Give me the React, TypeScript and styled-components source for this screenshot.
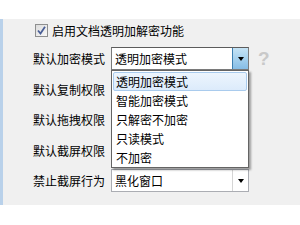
import React from "react";
import styled, { createGlobalStyle } from "styled-components";

const GlobalStyle = createGlobalStyle`
  html, body {
    margin: 0;
    padding: 0;
    background: #ffffff;
  }
  body {
    font-family: "Noto Sans CJK SC", "Noto Sans", sans-serif;
    font-size: 12px;
    color: #000000;
  }
`;

const Page = styled.div`
  width: 300px;
  height: 225px;
  overflow: hidden;
  background: #ffffff;
`;

const TopGap = styled.div`
  height: 19px;
`;

const Panel = styled.div`
  position: relative;
  height: 186px;
  box-sizing: border-box;
  background: #f0f0f0;
  border-left: 3px solid #b9d1ea;
  padding: 5px 0 0 30px;
  overflow: hidden;
`;

const CheckRow = styled.label`
  display: flex;
  align-items: center;
  gap: 4px;
  height: 13px;
  margin-left: 2px;
  line-height: 13px;
  white-space: nowrap;
`;

const CheckBox = styled.span`
  position: relative;
  width: 13px;
  height: 13px;
  box-sizing: border-box;
  border: 1px solid #8e8f8f;
  background: linear-gradient(135deg, #dcdcdc 0%, #f8f8f8 100%);
  flex: none;
  svg {
    position: absolute;
    left: 1px;
    top: 1px;
  }
`;

const Form = styled.div`
  display: grid;
  grid-template-columns: 78px 138px auto;
  grid-auto-rows: 23px;
  row-gap: 7.5px;
  margin-top: 10px;
  align-items: center;
`;

const Label = styled.span`
  line-height: 23px;
  white-space: nowrap;
`;

const WideLabel = styled(Label)`
  grid-column: 1 / 4;
`;

const SelectWrap = styled.div`
  position: relative;
  height: 23px;
`;

const Select = styled.div<{ $open?: boolean }>`
  display: flex;
  height: 23px;
  box-sizing: border-box;
  border: 1px solid ${({ $open }) => ($open ? "#7a7a7a" : "#abadb3")};
  border-top-color: ${({ $open }) => ($open ? "#5c5c5c" : "#abadb3")};
  background: #ffffff;
`;

const SelectValue = styled.span`
  flex: 1;
  padding-left: 3px;
  line-height: 21px;
  white-space: nowrap;
  overflow: hidden;
`;

const ArrowButton = styled.span<{ $open?: boolean }>`
  display: flex;
  align-items: center;
  justify-content: center;
  width: 16px;
  box-sizing: border-box;
  border-left: 1px solid ${({ $open }) => ($open ? "#3c7fb1" : "#d5d5d5")};
  background: ${({ $open }) =>
    $open ? "linear-gradient(#c5e3f5 0%, #a6d1ee 50%, #86bde6 100%)" : "#ffffff"};
  &::after {
    content: "";
    border-left: 3.5px solid transparent;
    border-right: 3.5px solid transparent;
    border-top: 4px solid #000000;
  }
`;

const Help = styled.span`
  padding-left: 9px;
  font-family: "Liberation Sans", Arial, sans-serif;
  font-weight: bold;
  font-size: 19px;
  line-height: 23px;
  color: #c9c9c9;
`;

const DropList = styled.ul`
  position: absolute;
  top: 23px;
  left: 0;
  width: 138px;
  height: 98px;
  box-sizing: border-box;
  margin: 0;
  padding: 1px;
  list-style: none;
  background: #ffffff;
  border: 1px solid #646464;
  box-shadow: 2px 2px 2px rgba(0, 0, 0, 0.35);
  z-index: 10;
`;

const Option = styled.li<{ $active?: boolean }>`
  height: 19px;
  box-sizing: border-box;
  padding-left: 2px;
  line-height: 17px;
  white-space: nowrap;
  border: 1px solid ${({ $active }) => ($active ? "#a9cbed" : "transparent")};
  border-radius: 2px;
  background: ${({ $active }) =>
    $active ? "linear-gradient(#edf5fd, #dcebfb)" : "transparent"};
`;

const modes = ["透明加密模式", "智能加密模式", "只解密不加密", "只读模式", "不加密"];

const Combo: React.FC<{ value?: string; open?: boolean }> = ({ value, open }) => (
  <Select $open={open}>
    <SelectValue>{value}</SelectValue>
    <ArrowButton $open={open} />
  </Select>
);

export default function App() {
  return (
    <Page>
      <GlobalStyle />
      <TopGap />
      <Panel>
        <CheckRow>
          <CheckBox>
            <svg width="9" height="9" viewBox="0 0 9 9">
              <path d="M1 4.5 L3.5 7.5 L8 0.8" fill="none" stroke="#4a5f97" strokeWidth="1.8" />
            </svg>
          </CheckBox>
          启用文档透明加解密功能
        </CheckRow>
        <Form>
          <Label>默认加密模式</Label>
          <SelectWrap>
            <Combo value="透明加密模式" open />
            <DropList>
              {modes.map((m, i) => (
                <Option key={m} $active={i === 0}>
                  {m}
                </Option>
              ))}
            </DropList>
          </SelectWrap>
          <Help>?</Help>

          {/* these three combos sit under the open list */}
          <Label>默认复制权限</Label>
          <Combo />
          <span />

          <Label>默认拖拽权限</Label>
          <Combo />
          <span />

          <Label>默认截屏权限</Label>
          <Combo />
          <span />

          <Label>禁止截屏行为</Label>
          <Combo value="黑化窗口" />
          <span />

          <WideLabel>加密时对以下程序生效</WideLabel>
        </Form>
      </Panel>
    </Page>
  );
}
